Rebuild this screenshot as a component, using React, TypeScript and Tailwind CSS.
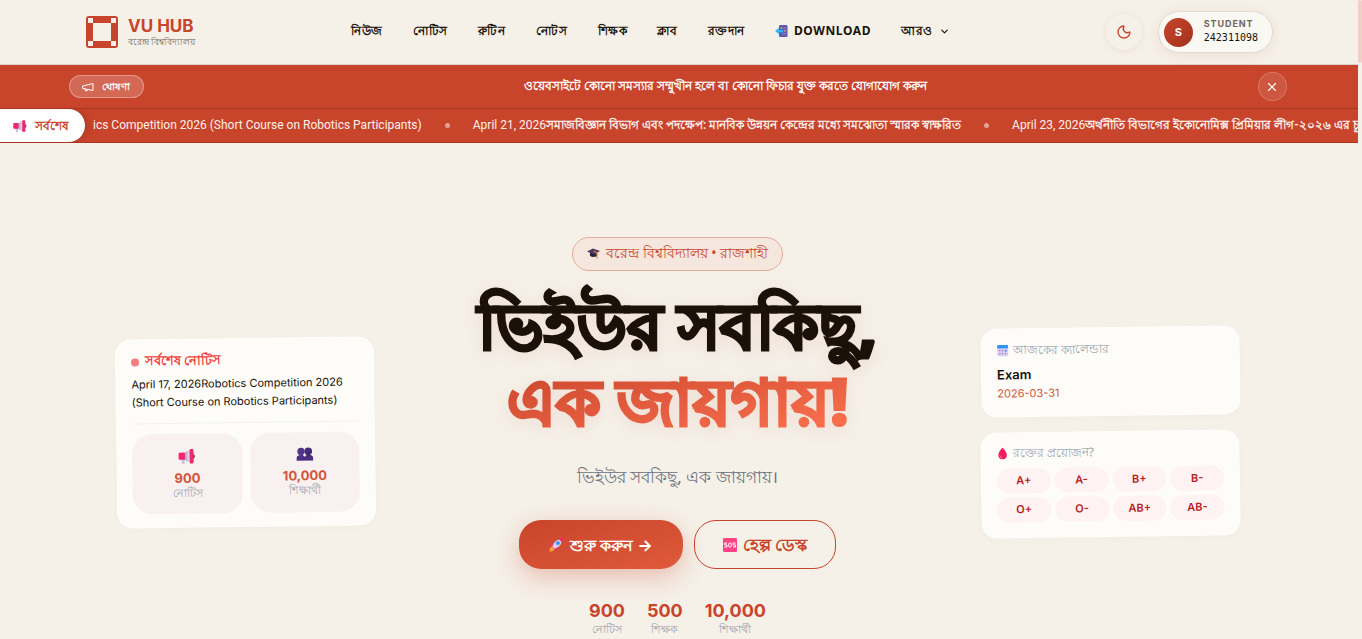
import type { ReactNode } from "react";
import { Moon, X, ChevronDown } from "lucide-react";

const NAV_LINKS = ["নিউজ", "নোটিস", "রুটিন", "নোটস", "শিক্ষক", "ক্লাব", "রক্তদান"];

const BLOOD_GROUPS = ["A+", "A-", "B+", "B-", "O+", "O-", "AB+", "AB-"];

const TICKER_ITEMS = [
  { date: "April 21, 2026", title: "সমাজবিজ্ঞান বিভাগ এবং পদক্ষেপ: মানবিক উন্নয়ন কেন্দ্রের মধ্যে সমঝোতা স্মারক স্বাক্ষরিত" },
  { date: "April 23, 2026", title: "অর্থনীতি বিভাগের ইকোনোমিক্স প্রিমিয়ার লীগ-২০২৬ এর চূড়া" },
];

const STATS = [
  { value: "900", label: "নোটিস" },
  { value: "500", label: "শিক্ষক" },
  { value: "10,000", label: "শিক্ষার্থী" },
];

/* ── Icons ─────────────────────────────────────── */

function Logo() {
  return (
    <svg width="34" height="34" viewBox="0 0 34 34" className="shrink-0">
      <rect x="1" y="1" width="32" height="32" rx="3" fill="#c8442b" />
      <rect x="8" y="8" width="18" height="18" fill="#f5f0e8" />
      <path d="M3 3h5v5H3zM26 3h5v5h-5zM3 26h5v5H3zM26 26h5v5h-5z" fill="#f5f0e8" />
    </svg>
  );
}

function MegaphoneIcon() {
  return (
    <svg viewBox="0 0 24 24" className="size-3" fill="none" stroke="currentColor" strokeWidth="2" strokeLinecap="round" strokeLinejoin="round">
      <path d="M2 10l20-5v14L2 15z" />
      <path d="M11.600 17.500a3 3 0 1 1-5.800-1.500" />
    </svg>
  );
}

function HornEmoji({ className }: { className: string }) {
  return (
    <svg viewBox="0 0 18 16" className={className}>
      <path d="M2.500 10h4v6H4z" fill="#c9bfe0" />
      <path d="M6 4.500l7-4v14.500l-7-3.500z" fill="#b9afd3" />
      <path d="M9.500 2.500l3.500-2v14.500l-3.500-1.800z" fill="#d8d1ea" />
      <rect x="0" y="4" width="7" height="7.500" rx="1" fill="#f4256b" />
      <path d="M15.500 5q4.500 3 0 6z" fill="#8a3a83" />
      <rect x="12" y="0" width="4.200" height="16" rx="2" fill="#ee2a68" />
    </svg>
  );
}

function PeopleEmoji() {
  return (
    <svg viewBox="0 0 18 15" className="h-[14px] w-[17px]">
      <circle cx="5" cy="4.500" r="4" fill="#533588" />
      <circle cx="12.800" cy="4.500" r="4" fill="#46297a" />
      <path d="M0 14.500v-2.500Q0 9 3.500 8.500h3Q8.500 8.800 9 10.500Q9.500 8.800 11.500 8.500h3q3.500 .5 3.500 3.500v2.500z" fill="#4b2d80" />
      <rect x="3" y="6" width="4" height="5" fill="#533588" />
      <rect x="10.800" y="6" width="4" height="5" fill="#46297a" />
    </svg>
  );
}

function PhoneEmoji() {
  return (
    <svg viewBox="0 0 13 12" className="h-3 w-[13px]">
      <rect x="4" y="0" width="8.500" height="12" rx="1" fill="#6a57ad" />
      <rect x="5" y="1.500" width="6.500" height="9" fill="#3a6fc4" />
      <path d="M5.500 2.500h2v1.500h-2zM9 5h2v1.500H9z" fill="#f28b50" />
      <path d="M9 2.500h2v1.500H9zM7.500 8h3.500v1.500H7.500z" fill="#d4568d" />
      <path d="M0 6l4-3v2h4v2.200H4V9z" fill="#35b5f5" />
    </svg>
  );
}

function CapEmoji() {
  return (
    <svg viewBox="0 0 13 12" className="h-3 w-[13px]">
      <path d="M3 5h7v4q-3.500 2-7 0z" fill="#2b2140" />
      <path d="M0 4.500L6 1.500l7 2.500L7 7.500z" fill="#453960" />
      <path d="M6.500 4l3.500 2V11.500" fill="none" stroke="#e58a3c" strokeWidth="1.200" />
    </svg>
  );
}

function CalendarEmoji() {
  return (
    <svg viewBox="0 0 12 12" className="h-3 w-3 shrink-0">
      <rect x="0.500" y="1" width="11" height="11" rx="1.500" fill="#dccdf3" />
      <path d="M.5 3.800V2q0-1.500 1.500-1.500h8q1.500 0 1.500 1.500v1.800z" fill="#2a93f4" />
      <path d="M2.500 5.500h1.200v1.200H2.500zM5.400 5.500h1.200v1.200H5.400zM2.500 8.500h1.200v1.200H2.500zM5.400 8.500h1.200v1.200H5.400zM8.300 8.500h1.200v1.200H8.300z" fill="#8a76b8" />
      <rect x="8.200" y="5.300" width="1.800" height="1.800" fill="#2a93f4" />
    </svg>
  );
}

function DropEmoji() {
  return (
    <svg viewBox="0 0 12 12" className="h-3 w-3 shrink-0">
      <path d="M6 0q4.300 4.800 4.300 7.700a4.300 4.300 0 0 1-8.600 0Q1.700 4.800 6 0z" fill="#ef1f62" />
      <path d="M3.300 8q.3 2 2.200 2.400" fill="none" stroke="#ff7fa5" strokeWidth="0.900" />
    </svg>
  );
}

function RocketEmoji() {
  return (
    <svg viewBox="0 0 16 16" className="h-[15px] w-[15px] shrink-0">
      <path d="M.5 15.500Q.5 11 3 10l3 3q-1 2.500-5.500 2.500z" fill="#ff9a2e" />
      <path d="M1 9.500Q2 5.500 5.500 5.500L4 10zM10.500 10.500Q10.500 14 6.500 15L6 12z" fill="#e9356f" />
      <path d="M3.500 10Q6 2 14 2Q14 10 6 12.500z" fill="#d6cfe8" />
      <path d="M10.500 2.500Q13 .3 15.700.3q0 3-2.200 5.200z" fill="#ee2f6c" />
      <circle cx="9.500" cy="6.500" r="2" fill="#2d8ff0" />
    </svg>
  );
}

function SosEmoji() {
  return (
    <svg viewBox="0 0 14 14" className="h-[14px] w-[14px] shrink-0">
      <rect width="14" height="14" rx="1" fill="#ff4384" />
      <g fill="none" stroke="#fff" strokeWidth="1">
        <path d="M4 5H1.700v2H4v2H1.500M12.500 5h-2.300v2h2.300v2H10" />
        <rect x="5.700" y="5" width="2.600" height="4" rx="1" />
      </g>
    </svg>
  );
}

/* ── Header ────────────────────────────────────── */

function Header() {
  return (
    <header className="border-b border-[#d8d3cc]">
      <div className="mx-auto flex h-16 max-w-[1252px] items-center justify-between px-8">
        <a href="#" className="flex items-center gap-[9px]">
          <Logo />
          <span className="flex flex-col">
            <span className="font-[Inter,sans-serif] text-[17px] leading-5 font-bold text-[#c8442b]">VU HUB</span>
            <span className="text-[9px] leading-3 text-[#6f675b]">বরেন্দ্র বিশ্ববিদ্যালয়</span>
          </span>
        </a>

        <nav className="flex items-center gap-[30px] pb-0.5 text-xs font-bold tracking-wider whitespace-nowrap text-[#1a1208]">
          {NAV_LINKS.map((label) => (
            <a key={label} href="#">{label}</a>
          ))}
          <a href="#" className="flex items-center gap-1.5">
            <PhoneEmoji /> DOWNLOAD
          </a>
          <button type="button" className="flex items-center gap-1.5">
            আরও <ChevronDown size={11} strokeWidth={2.5} />
          </button>
        </nav>

        <div className="flex items-center gap-4">
          <button type="button" aria-label="Toggle theme" className="flex size-9 items-center justify-center rounded-full text-[#c8442b] shadow-[0_1px_6px_rgba(200,68,43,0.1)]">
            <Moon size={16} />
          </button>
          <button type="button" className="flex h-[42px] items-center gap-[11px] rounded-full border border-[#dedad4] bg-[#faf8f3] pr-[14px] pl-[5px] text-left shadow-[0_2px_12px_rgba(200,68,43,0.1)]">
            <span className="flex size-[29px] items-center justify-center rounded-full bg-linear-to-br from-[#c8442b] to-[#a2331e] font-[Inter,sans-serif] text-[11px] font-bold text-white">S</span>
            <span className="flex flex-col pb-0.5">
              <span className="font-[Inter,sans-serif] text-[9px] leading-3 font-bold tracking-widest text-[#6f675b]">STUDENT</span>
              <span className="font-['DejaVu_Sans_Mono',monospace] text-[10px] leading-[15px] font-medium text-[#1a1208]">242311098</span>
            </span>
          </button>
        </div>
      </div>
    </header>
  );
}

function Announcement() {
  return (
    <div className="border-b border-[#a8361f] bg-[#c8442b] pr-[3px]">
      <div className="mx-auto flex h-[43px] max-w-[1218px] items-center text-white">
        <span className="flex h-[23px] w-[75px] items-center justify-center gap-2 rounded-full border border-white/30 bg-white/20 text-[10px] font-bold">
          <MegaphoneIcon /> ঘোষণা
        </span>
        <p className="flex-1 pb-0.5 pl-[50px] text-center text-xs font-extrabold">ওয়েবসাইটে কোনো সমস্যার সম্মুখীন হলে বা কোনো ফিচার যুক্ত করতে যোগাযোগ করুন</p>
        <button type="button" aria-label="Close" className="flex size-[29px] items-center justify-center rounded-full border border-white/20 bg-white/10">
          <X size={14} />
        </button>
      </div>
    </div>
  );
}

function Ticker() {
  return (
    <div className="flex h-[34px] items-stretch overflow-hidden border-b border-[#a8361f] bg-[#c8442b]">
      <div className="flex w-[85px] shrink-0 items-center gap-2 rounded-r-full bg-white pl-[13px] text-xs font-bold text-[#c8442b] shadow-[2px_0_8px_rgba(0,0,0,0.15)]">
        <HornEmoji className="h-3 w-[14px] shrink-0" /> সর্বশেষ
      </div>
      <div className="ml-2 flex items-center gap-[23px] pb-0.5 font-[Roboto,sans-serif] text-xs whitespace-nowrap text-[#fdf1ed]">
        <span>ics Competition 2026 (Short Course on Robotics Participants)</span>
        {TICKER_ITEMS.map((item) => (
          <span key={item.date} className="flex items-center gap-[23px]">
            <span className="mt-0.5 size-[5px] rounded-full bg-white/50" />
            <span>{item.date}<span className="font-semibold">{item.title}</span></span>
          </span>
        ))}
      </div>
    </div>
  );
}

/* ── Hero cards ────────────────────────────────── */

function Card({ children }: { children: ReactNode }) {
  return (
    <section className="-rotate-[0.8deg] rounded-2xl border border-white/60 bg-[#fdfcf8] px-[15px] shadow-[0_2px_8px_rgba(120,80,40,0.02)]">
      {children}
    </section>
  );
}

function MiniStat({ icon, value, label }: { icon: ReactNode; value: string; label: string }) {
  return (
    <div className="flex h-20 flex-col items-center rounded-[20px] bg-[#f9f1ef] pt-[15px]">
      {icon}
      <span className="mt-1.5 font-[Inter,sans-serif] text-[13px] leading-4 font-bold text-[#d2553c]">{value}</span>
      <span className="text-[11px] leading-[14px] text-[#9ca3af]">{label}</span>
    </div>
  );
}

function NoticeCard() {
  return (
    <Card>
      <div className="pt-[10px] pb-[13px]">
        <h2 className="flex items-center gap-1.5 text-[13px] leading-5 font-bold text-[#ef4444]">
          <span className="mt-1 size-2 rounded-full bg-[#f47c7c]" /> সর্বশেষ নোটিস
        </h2>
        <p className="mt-[5px] border-b border-[#f1f1f5] pb-3 font-[Inter,sans-serif] text-[11px] leading-[18px] text-[#1a1208]">
          April 17, 2026Robotics Competition 2026 (Short Course on Robotics Participants)
        </p>
        <div className="mt-[10px] grid grid-cols-2 gap-2">
          <MiniStat icon={<HornEmoji className="h-[15px] w-[17px]" />} value="900" label="নোটিস" />
          <MiniStat icon={<PeopleEmoji />} value="10,000" label="শিক্ষার্থী" />
        </div>
      </div>
    </Card>
  );
}

function CalendarCard() {
  return (
    <Card>
      <div className="pt-[11px] pb-[14px]">
        <h2 className="flex items-center gap-1 text-xs leading-5 text-[#9ca3af]">
          <CalendarEmoji /> আজকের ক্যালেন্ডার
        </h2>
        <p className="mt-1 font-[Inter,sans-serif] text-[13px] leading-5 font-semibold text-[#1a1208]">Exam</p>
        <p className="font-[Inter,sans-serif] text-[11px] leading-[18px] text-[#d2553c]">2026-03-31</p>
      </div>
    </Card>
  );
}

function BloodCard() {
  return (
    <Card>
      <div className="pt-[10px] pb-[15px]">
        <h2 className="flex items-center gap-1 text-xs leading-5 text-[#9ca3af]">
          <DropEmoji /> রক্তের প্রয়োজন?
        </h2>
        <div className="mt-[5px] grid grid-cols-4 gap-1">
          {BLOOD_GROUPS.map((group) => (
            <a key={group} href="#" className="rounded-full bg-[#fef2f2] text-center font-[Inter,sans-serif] text-[11px] leading-[25px] font-semibold text-[#b91c1c]">
              {group}
            </a>
          ))}
        </div>
      </div>
    </Card>
  );
}

function Hero() {
  return (
    <main className="pt-[94px] pr-[3px]">
      <div className="mx-auto flex max-w-[1124px] items-center justify-between">
        <aside className="w-[259px] pb-[10px]">
          <NoticeCard />
        </aside>

        <div className="flex flex-col items-center">
          <p className="flex h-[34px] items-center gap-1.5 rounded-full border border-[#e6ab9d] bg-[#f5e6de] px-[14px] pb-0.5 text-sm text-[#c8442b]">
            <CapEmoji /> বরেন্দ্র বিশ্ববিদ্যালয় • রাজশাহী
          </p>
          <h1 className="mt-4 text-center text-[64px] leading-[76px] font-extrabold whitespace-nowrap text-[#1a1208] drop-shadow-[0_4px_8px_rgba(200,68,43,0.1)] [-webkit-text-stroke:3px]">
            ভিইউর সবকিছু,
            <span className="mx-auto block w-fit bg-linear-to-br from-[#c8442b] to-[#ff7452] bg-clip-text text-transparent">এক জায়গায়!</span>
          </h1>
          <p className="mt-[22px] text-[17px] leading-8 text-[#6b7280]">ভিইউর সবকিছু, এক জায়গায়।</p>
          <div className="mt-[27px] flex gap-[11px]">
            <button type="button" className="flex h-[49px] w-[164px] items-center justify-center gap-1.5 rounded-[22px] bg-linear-to-br from-[#c8442b] to-[#e05a3a] text-base font-bold whitespace-nowrap text-white shadow-[0_8px_24px_rgba(200,68,43,0.3)]">
              <RocketEmoji />
              <span>শুরু করুন <span className="font-[Inter,sans-serif]">→</span></span>
            </button>
            <button type="button" className="flex h-[49px] w-[142px] items-center justify-center gap-1.5 rounded-[22px] border border-[#c8442b] text-[17px] font-semibold whitespace-nowrap text-[#c8442b]">
              <SosEmoji /> হেল্প ডেস্ক
            </button>
          </div>
          <dl className="mt-8 flex gap-[22px] text-center">
            {STATS.map((stat) => (
              <div key={stat.label} className="flex flex-col-reverse">
                <dt className="text-[11px] leading-4 text-[#9ca3af]">{stat.label}</dt>
                <dd className="font-[Inter,sans-serif] text-lg leading-5 font-bold text-[#c8442b]">{stat.value}</dd>
              </div>
            ))}
          </dl>
        </div>

        <aside className="flex w-[259px] flex-col gap-[15px] pb-[10px]">
          <CalendarCard />
          <BloodCard />
        </aside>
      </div>
    </main>
  );
}

export default function App() {
  return (
    <div className="relative min-h-screen overflow-x-hidden bg-[#f5f0e8] pr-1 font-['Noto_Sans',sans-serif]">
      <Header />
      <Announcement />
      <Ticker />
      <Hero />
      {/* Scroll thumb */}
      <div className="absolute top-0 right-0 h-[63px] w-1 rounded-full bg-[#f0cfc4]" />
    </div>
  );
}
